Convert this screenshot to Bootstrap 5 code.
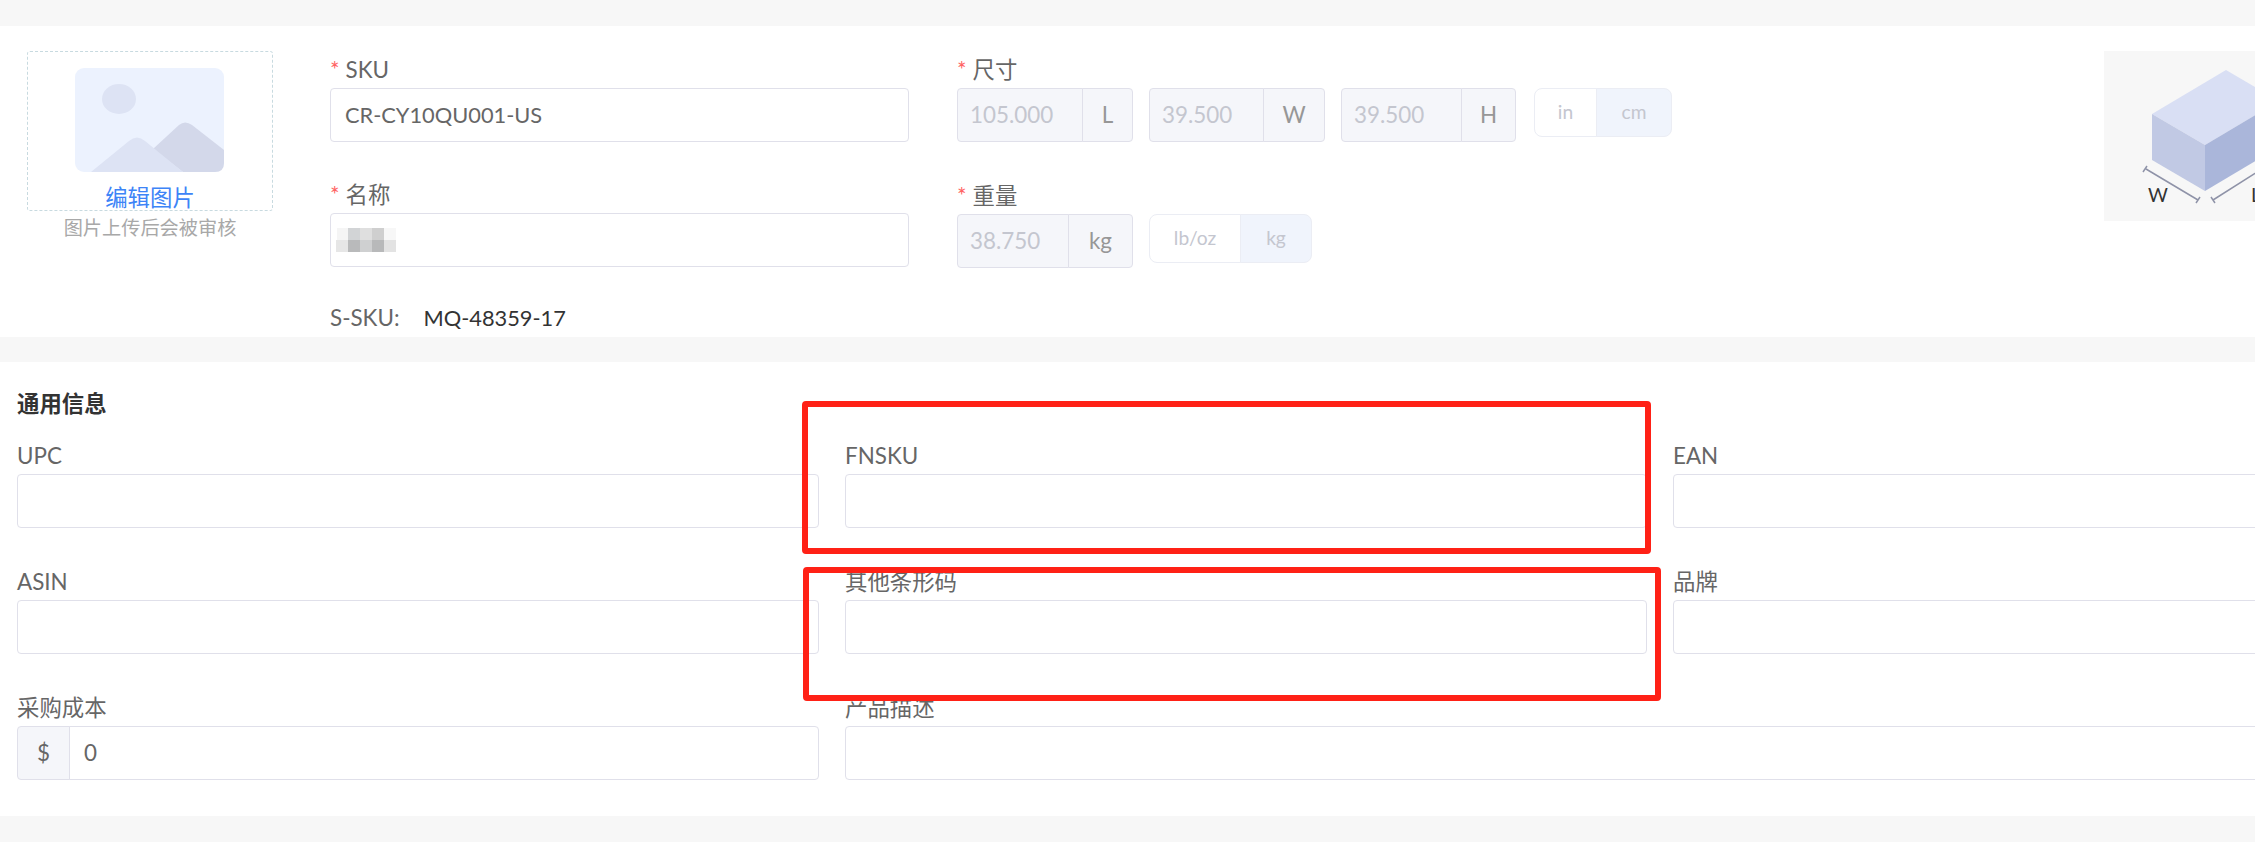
<!DOCTYPE html>
<html lang="zh">
<head>
<meta charset="utf-8">
<title>SKU</title>
<link href="https://cdn.jsdelivr.net/npm/bootstrap@5.3.0/dist/css/bootstrap.min.css" rel="stylesheet">
<style>
html,body{height:849px;overflow:hidden;background:#fff}
body{font-family:Lato,"Noto Sans CJK SC",sans-serif;font-size:22.4px;color:#666;position:relative}
.canvas-page{width:2484px;padding-top:26px;background:#f7f7f7;height:849px}
.band{background:#fff}
.band-top{height:311px;padding-top:25px;padding-left:27px}
.band-mid{height:454px;margin-top:25px;padding:28px 0 0 17px}
.band-end{height:7px;margin-top:26px}
.upload-col{width:246px;margin-right:57px}
.upload-box{height:160px;border:1px dashed #c8dae0;border-radius:3px;padding-top:16px}
.upload-box svg{display:block;margin:0 0 0 47px}
.upload-link{color:#3d84f7;font-size:22.4px;line-height:28px;margin-top:12px;text-decoration:none;display:block;text-align:center}
.upload-hint{color:#a8a8a8;font-size:19.2px;line-height:26px;margin-top:4px;text-align:center}
.main-col{width:579px;margin-right:48px;padding-top:4px}
.dim-col{padding-top:4px}
.field-label{height:28px;line-height:30px;margin-bottom:5px;color:#666;white-space:nowrap}
.req{color:#ff6464;margin-right:6px}
.field-gap{margin-bottom:39px}
.field-gap-tight{margin-bottom:38px}
.form-control.tall-input,.input-group-text.tall-addon{height:54px;font-size:22.4px;border-color:#e0e0ea;border-radius:4px;color:#666;box-shadow:none}
.form-control.tall-input{padding:0 14px 2px;font-family:Lato,"Noto Sans CJK SC",sans-serif}
.form-control.sku-input{font-size:21.8px}
.form-control.tall-input:disabled{background:#f5f6fa;color:#c4c6cf;opacity:1;padding:0 12px 2px}
.input-group-text.tall-addon{background:#f5f6fa;color:#979797;justify-content:center;padding:0}
.input-group-text.tall-addon.currency{color:#666;width:53px;flex:none}
.group-176{width:176px;flex-wrap:nowrap}
.group-175{width:175px;flex-wrap:nowrap}
.addon-51{width:51px;flex:none}
.addon-62{width:62px;flex:none}
.addon-55{width:55px;flex:none}
.addon-65{width:65px;flex:none}
.unit-group{height:49px}
.unit-group-shift{margin-left:2px}
.btn.unit-btn{font-size:19.2px;height:49px;padding:0;border:1px solid #ebedf4;color:#c4c6cf;background:#fff;border-radius:8px}
.btn.unit-btn.is-on{background:#f0f4fc}
.unit-63{width:63px}.unit-76{width:76px}.unit-92{width:92px}.unit-72{width:72px}
.mosaic-control{display:flex;align-items:center;padding:0 5px!important}
.sku-line{color:#666;line-height:28px;margin-top:37px;white-space:nowrap}
.sku-value{color:#333;margin-left:18px;font-size:21.8px}
.preview-box{width:240px;height:170px;background:#f7f7f7;margin-left:432px}
.preview-box svg{display:block}
.preview-text{font:19.2px Lato,sans-serif;fill:#333}
.section-title{font-weight:700;color:#333;line-height:28px;margin-bottom:23px}
.form-rows{width:2484px;margin-left:0;margin-right:0}
.form-rows>*{padding-left:0;padding-right:26px;margin-bottom:39px}
.red-mark{position:absolute;border:6px solid #ff2116;border-radius:4px;pointer-events:none}
.red-one{left:802px;top:401px;width:849px;height:153px}
.red-two{left:803px;top:567px;width:858px;height:134px}
</style>
</head>
<body>
<div class="canvas-page">
  <section class="band band-top d-flex">
    <div class="upload-col">
      <div class="upload-box">
        <svg width="149" height="104" viewBox="0 0 149 104">
          <rect width="149" height="104" rx="9" fill="#ecf2fe"/>
          <ellipse cx="44" cy="31" rx="17" ry="15" fill="#dde3f4"/>
          <path d="M78 81L104 57Q110 52 117 57L149 82V95Q149 104 140 104H108Z" fill="#d3d8ea"/>
          <path d="M16 104L54 73Q62 66 70 73L108 104Z" fill="#dde3f4"/>
        </svg>
        <a href="#" class="upload-link">编辑图片</a>
      </div>
      <div class="upload-hint">图片上传后会被审核</div>
    </div>
    <div class="main-col">
      <div class="field-gap-tight">
        <div class="field-label"><span class="req">*</span>SKU</div>
        <input class="form-control tall-input sku-input" value="CR-CY10QU001-US">
      </div>
      <div>
        <div class="field-label"><span class="req">*</span>名称</div>
        <div class="form-control tall-input mosaic-control">
          <svg width="60" height="24" viewBox="0 0 60 24" shape-rendering="crispEdges">
            <rect x="1" y="0" width="11" height="12" fill="#f5f5f5"/><rect x="12" y="0" width="12" height="12" fill="#d2d4d6"/><rect x="24" y="0" width="12" height="12" fill="#dfdfdf"/><rect x="36" y="0" width="12" height="12" fill="#cfcfcf"/><rect x="48" y="0" width="12" height="12" fill="#f7f7f7"/>
            <rect x="0" y="12" width="12" height="12" fill="#e6e6e6"/><rect x="12" y="12" width="12" height="12" fill="#b9babb"/><rect x="24" y="12" width="12" height="12" fill="#cfd0d1"/><rect x="36" y="12" width="12" height="12" fill="#b8b9ba"/><rect x="48" y="12" width="12" height="12" fill="#e3e3e3"/>
          </svg>
        </div>
      </div>
      <div class="sku-line">S-SKU:<span class="sku-value ms-4">MQ-48359-17</span></div>
    </div>
    <div class="dim-col">
      <div class="field-gap">
        <div class="field-label"><span class="req">*</span>尺寸</div>
        <div class="d-flex gap-3 align-items-start">
          <div class="input-group group-176"><input class="form-control tall-input" value="105.000" disabled><span class="input-group-text tall-addon addon-51">L</span></div>
          <div class="input-group group-176"><input class="form-control tall-input" value="39.500" disabled><span class="input-group-text tall-addon addon-62">W</span></div>
          <div class="input-group group-175"><input class="form-control tall-input" value="39.500" disabled><span class="input-group-text tall-addon addon-55">H</span></div>
          <div class="btn-group unit-group unit-group-shift"><button type="button" class="btn unit-btn unit-63">in</button><button type="button" class="btn unit-btn is-on unit-76">cm</button></div>
        </div>
      </div>
      <div>
        <div class="field-label"><span class="req">*</span>重量</div>
        <div class="d-flex gap-3 align-items-start">
          <div class="input-group group-176"><input class="form-control tall-input" value="38.750" disabled><span class="input-group-text tall-addon addon-65">kg</span></div>
          <div class="btn-group unit-group"><button type="button" class="btn unit-btn unit-92">lb/oz</button><button type="button" class="btn unit-btn is-on unit-72">kg</button></div>
        </div>
      </div>
    </div>
    <div class="preview-box">
      <svg width="240" height="170" viewBox="0 0 240 170">
        <path d="M122 19L48 63L101 94L175 50Z" fill="#d9dff4"/>
        <path d="M48 63L101 94V140L48 109Z" fill="#c1c9e4"/>
        <path d="M101 94L175 50V96L101 140Z" fill="#aab6da"/>
        <path d="M42 118L94 149M39 121L43 115M92 152L96 146M109 149L175 107M107 146L111 152" stroke="#8f93a8" stroke-width="1.5" fill="none"/>
        <text class="preview-text" x="44" y="151">W</text>
        <text class="preview-text" x="147" y="151">L</text>
      </svg>
    </div>
  </section>
  <section class="band band-mid">
    <div class="section-title">通用信息</div>
    <div class="row form-rows">
      <div class="col-4"><div class="field-label">UPC</div><input class="form-control tall-input"></div>
      <div class="col-4"><div class="field-label">FNSKU</div><input class="form-control tall-input"></div>
      <div class="col-4"><div class="field-label">EAN</div><input class="form-control tall-input"></div>
      <div class="col-4"><div class="field-label">ASIN</div><input class="form-control tall-input"></div>
      <div class="col-4"><div class="field-label">其他条形码</div><input class="form-control tall-input"></div>
      <div class="col-4"><div class="field-label">品牌</div><input class="form-control tall-input"></div>
      <div class="col-4"><div class="field-label">采购成本</div><div class="input-group"><span class="input-group-text tall-addon currency">$</span><input class="form-control tall-input" value="0"></div></div>
      <div class="col-8"><div class="field-label">产品描述</div><input class="form-control tall-input"></div>
    </div>
  </section>
  <div class="band band-end"></div>
</div>
<div class="red-mark red-one"></div>
<div class="red-mark red-two"></div>
<script src="https://cdn.jsdelivr.net/npm/bootstrap@5.3.0/dist/js/bootstrap.bundle.min.js"></script>
</body>
</html>
